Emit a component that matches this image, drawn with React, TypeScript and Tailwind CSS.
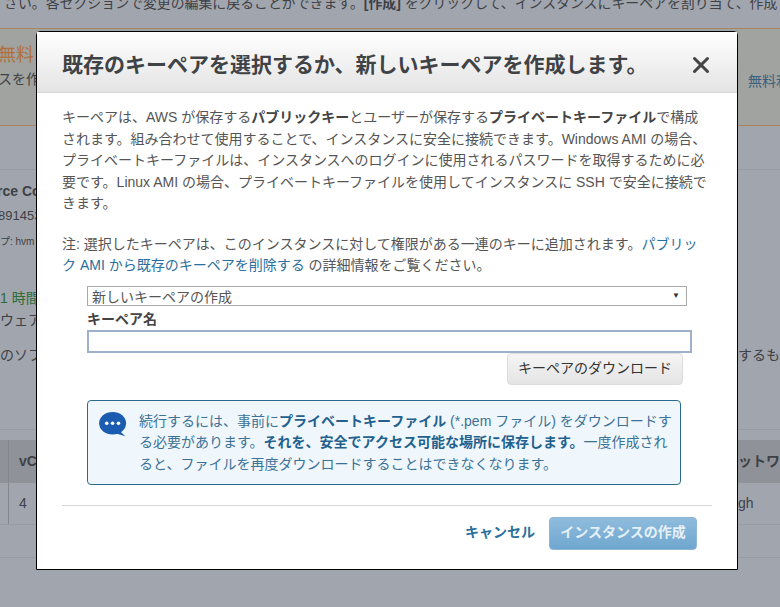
import { X } from "lucide-react";

const font = { fontFamily: '"Liberation Sans", "Noto Sans CJK JP", sans-serif' };

function Backdrop() {
  return (
    <div className="h-[607px] overflow-hidden bg-[#a1a5ad] text-[14px] text-[#3e4146]">
      <div className="h-[28px] overflow-hidden whitespace-nowrap">
        <p className="-mt-[8px] ml-[4px] text-[13.9px] leading-[22px]">
          さい。各セクションで変更の編集に戻ることができます。<b>[作成]</b> をクリックして、インスタンスにキーペアを割り当て、作成
        </p>
      </div>
      <div className="flex h-[98px] justify-between border-y border-[#a8845f] bg-[#a0a39f]">
        <div className="-ml-[2px] pt-[14px]">
          <p className="text-[18px] leading-[24px] text-[#b0703c]">無料</p>
          <p className="mt-[2px] text-[14px] leading-[20px]">スを作成</p>
        </div>
        <p className="w-[32px] overflow-hidden whitespace-nowrap pt-[42px] text-[14px] text-[#3c5f80]">無料利用</p>
      </div>
      <div className="mt-[43px] border-t border-[#979ba2] pt-[11px]">
        <p className="-ml-[3px] whitespace-nowrap text-[14px] font-bold">rce Compute</p>
        <p className="mt-[4px] -ml-[2px] text-[13px] leading-[20px]">891453</p>
        <p className="mt-[7px] text-[10px] leading-[18px]">プ: hvm</p>
        <p className="mt-[37px] text-[14px] leading-[20px] text-[#2f6b35]">1 時間</p>
        <p className="mt-[2px] text-[14px] leading-[20px]">ウェア</p>
        <div className="mt-[15px] flex justify-between text-[14px] leading-[20px]">
          <span>のソフ</span>
          <span className="w-[42px] overflow-hidden whitespace-nowrap">するもの</span>
        </div>
      </div>
      <div className="mt-[64px] border-y border-[#979ba2] pb-[32px]">
        <div className="mt-[10px] flex h-[43px] items-center justify-between border-b border-[#8e9299] bg-[#8f9399] text-[14px] font-bold">
          <span className="ml-[8px] border-l border-[#83878d] pl-[10px] leading-[42px]">vCPU</span>
          <span className="w-[42px] overflow-hidden whitespace-nowrap">ットワーク</span>
        </div>
        <div className="flex h-[42px] items-center justify-between border-b border-[#979ba2] text-[14px]">
          <span className="ml-[8px] border-l border-[#83878d] pl-[10px] leading-[41px]">4</span>
          <span className="w-[42px] overflow-hidden">gh</span>
        </div>
      </div>
    </div>
  );
}

function Modal() {
  return (
    <div className="absolute left-[36px] top-[31px] flex h-[539px] w-[702px] flex-col rounded-t-[4px] border border-black bg-white text-[14px] leading-[21.5px] text-[#555]">
      <div className="flex h-[61px] shrink-0 items-center justify-between border-b border-[#d8d8d8] bg-gradient-to-b from-white to-[#e4e4e4] pl-[25px] pr-[23px] pt-[6px]">
        <h1 className="whitespace-nowrap text-[21px] font-bold text-[#3f4346]">既存のキーペアを選択するか、新しいキーペアを作成します。</h1>
        <X className="size-[26px] text-[#444]" strokeWidth={2.8} />
      </div>
      <div className="flex-1 px-[25px] pt-[14px]">
        <p>
          キーペアは、AWS が保存する<b className="text-[#444]">パブリックキー</b>とユーザーが保存する<b className="text-[#444]">プライベートキーファイル</b>で構成<br />
          されます。組み合わせて使用することで、インスタンスに安全に接続できます。Windows AMI の場合、<br />
          プライベートキーファイルは、インスタンスへのログインに使用されるパスワードを取得するために必<br />
          要です。Linux AMI の場合、プライベートキーファイルを使用してインスタンスに SSH で安全に接続で<br />
          きます。
        </p>
        <p className="mt-[19px]">
          注: 選択したキーペアは、このインスタンスに対して権限がある一連のキーに追加されます。<a className="text-[#2a6f9e]">パブリッ<br />ク AMI から既存のキーペアを削除する</a> の詳細情報をご覧ください。
        </p>
        <div className="ml-[25px] mt-[9px] w-[600px]">
          <div className="flex h-[20px] items-center justify-between border border-[#aaa] pl-[4px] pr-[6px] text-[#555]">
            <span className="translate-y-[2px]">新しいキーペアの作成</span>
            <span className="text-[8px] text-[#333]">▼</span>
          </div>
          <label className="block h-[24px] pt-[3px] font-bold text-[#444]">キーペア名</label>
          <input className="block h-[23px] w-[605px] border-2 border-[#9db0cc] bg-white outline-none" />
          <div className="flex w-[596px] justify-end">
            <button className="h-[32px] w-[176px] rounded-[4px] border border-[#ddd] bg-gradient-to-b from-[#f5f5f5] to-[#e4e4e4] text-[#333]">キーペアのダウンロード</button>
          </div>
          <div className="mt-[15px] flex h-[85px] w-[594px] gap-[10px] rounded-[4px] border border-[#2a6a8c] bg-[#eff7fc] pl-[10px] pt-[10px] text-[#3d7196]">
            <svg viewBox="0 0 32 30" className="mt-[1px] h-[27px] w-[31px] shrink-0">
              <ellipse cx="15" cy="12.5" rx="15" ry="12.5" fill="#1b5cb0" />
              <path d="M22 20 L29 27 L19 24 Z" fill="#1b5cb0" />
              <circle cx="8.5" cy="12.5" r="2" fill="#fff" />
              <circle cx="15" cy="12.5" r="2" fill="#fff" />
              <circle cx="21.5" cy="12.5" r="2" fill="#fff" />
            </svg>
            <p>
              続行するには、事前に<b className="text-[#22618e]">プライベートキーファイル</b> (*.pem ファイル) をダウンロードす<br />
              る必要があります。<b className="text-[#22618e]">それを、安全でアクセス可能な場所に保存します。</b>一度作成され<br />
              ると、ファイルを再度ダウンロードすることはできなくなります。
            </p>
          </div>
        </div>
        <div className="mt-[20px] border-t border-[#d5d5d5]" />
        <div className="mt-[11px] flex items-center justify-end gap-[14px] pr-[15px]">
          <a className="font-bold text-[#2a6f9e]">キャンセル</a>
          <button className="h-[33px] w-[148px] rounded-[4px] border border-[#8db7d6] bg-gradient-to-b from-[#8fbcdc] to-[#6fa6cf] font-bold text-[#e6f0f7]">インスタンスの作成</button>
        </div>
      </div>
    </div>
  );
}

export default function App() {
  return (
    <div className="relative h-[607px] w-[780px] overflow-hidden" style={font}>
      <Backdrop />
      <Modal />
    </div>
  );
}
